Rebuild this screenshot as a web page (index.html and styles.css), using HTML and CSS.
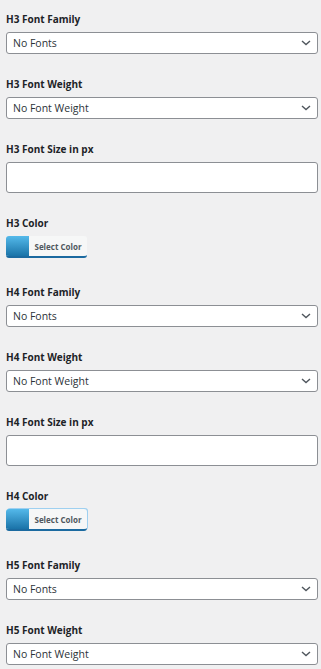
FILE: index.html
```html
<!DOCTYPE html>
<html lang="en">
  <head>
    <meta charset="UTF-8" />
    <meta name="viewport" content="width=device-width, initial-scale=1.0" />
    <title>Heading Typography</title>
    <link rel="stylesheet" href="styles.css">
  </head>
  <body>
    <div class="settings">
      <div class="field">
        <label for="h3Family">H3 Font Family</label>
        <select id="h3Family" class="select"><option>No Fonts</option></select>
      </div>
      <div class="field">
        <label for="h3Weight">H3 Font Weight</label>
        <select id="h3Weight" class="select"><option>No Font Weight</option></select>
      </div>
      <div class="field">
        <label for="h3Size">H3 Font Size in px</label>
        <input type="text" id="h3Size" class="text-input" />
      </div>
      <div class="field field-color">
        <label>H3 Color</label>
        <button type="button" class="color-btn">
          <span class="swatch"></span>
          <span class="color-text">Select Color</span>
        </button>
      </div>

      <div class="field">
        <label for="h4Family">H4 Font Family</label>
        <select id="h4Family" class="select"><option>No Fonts</option></select>
      </div>
      <div class="field">
        <label for="h4Weight">H4 Font Weight</label>
        <select id="h4Weight" class="select"><option>No Font Weight</option></select>
      </div>
      <div class="field">
        <label for="h4Size">H4 Font Size in px</label>
        <input type="text" id="h4Size" class="text-input" />
      </div>
      <div class="field field-color">
        <label>H4 Color</label>
        <button type="button" class="color-btn color-btn-focus">
          <span class="swatch"></span>
          <span class="color-text">Select Color</span>
        </button>
      </div>

      <div class="field">
        <label for="h5Family">H5 Font Family</label>
        <select id="h5Family" class="select"><option>No Fonts</option></select>
      </div>
      <div class="field">
        <label for="h5Weight">H5 Font Weight</label>
        <select id="h5Weight" class="select"><option>No Font Weight</option></select>
      </div>
    </div>
  </body>
</html>
```

FILE: styles.css
```css
body {
  margin: 0;
  background-color: #f0f0f1;
  font-family: "Open Sans", "Noto Sans", sans-serif;
  color: #1d2327;
}

.settings {
  padding: 12px 3px 0 6px;
}

.field {
  margin-bottom: 23px;
}

.field-color {
  margin-bottom: 27px;
}

label {
  display: block;
  font-size: 10px;
  font-weight: 700;
  line-height: 14px;
  margin-bottom: 6px;
  color: #1d2327;
}

.select {
  display: block;
  width: 100%;
  height: 22px;
  margin: 0;
  padding: 0 24px 0 6px;
  border: 1px solid #8c8f94;
  border-radius: 3px;
  background-color: #ffffff;
  background-image: url("data:image/svg+xml;utf8,<svg xmlns='http://www.w3.org/2000/svg' width='10' height='6' viewBox='0 0 10 6'><path d='M1 1l4 3.6L9 1' fill='none' stroke='%2350575e' stroke-width='1.4'/></svg>");
  background-repeat: no-repeat;
  background-position: right 6px center;
  -webkit-appearance: none;
  appearance: none;
  font-family: "Open Sans", "Noto Sans", sans-serif;
  font-size: 10.5px;
  color: #2c3338;
  box-sizing: border-box;
}

.text-input {
  display: block;
  width: 100%;
  height: 31px;
  margin: 0;
  padding: 0 8px;
  border: 1px solid #8c8f94;
  border-radius: 3px;
  background: #ffffff;
  box-sizing: border-box;
}

.color-btn {
  display: flex;
  align-items: stretch;
  height: 22px;
  width: 81px;
  padding: 0;
  border: none;
  border-bottom: 2px solid #1b6aa0;
  border-radius: 3px;
  background: #f6f7f7;
  overflow: hidden;
  cursor: pointer;
}

.color-btn-focus {
  box-shadow: 1px -1px 0 0 #9fd0f0;
}

.swatch {
  width: 23px;
  background: linear-gradient(to bottom, #54b9ea, #1a73a8);
}

.color-text {
  flex: 1;
  display: flex;
  align-items: center;
  justify-content: center;
  font-family: "Open Sans", "Noto Sans", sans-serif;
  font-size: 8px;
  font-weight: 700;
  color: #50575e;
}
```
